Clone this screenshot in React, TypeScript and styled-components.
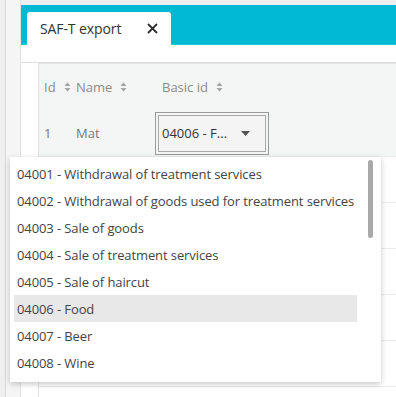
import React from "react";
import styled, { createGlobalStyle } from "styled-components";

const codes = [
  "04001 - Withdrawal of treatment services",
  "04002 - Withdrawal of goods used for treatment services",
  "04003 - Sale of goods",
  "04004 - Sale of treatment services",
  "04005 - Sale of haircut",
  "04006 - Food",
  "04007 - Beer",
  "04008 - Wine",
];

function SortIcon() {
  return (
    <svg width="7" height="10" viewBox="0 0 7 10">
      <path d="M3.5 0.5 L6.5 4 L0.5 4 Z M3.5 9.5 L6.5 6 L0.5 6 Z" fill="#a3a3a3" />
    </svg>
  );
}

export default function App() {
  return (
    <>
      <GlobalStyle />
      <Page>
        <Gutter />
        <Side />
        <Main>
          <TabBar>
            <Tab>
              <span>SAF-T export</span>
              <svg width="11" height="11" viewBox="0 0 11 11">
                <path d="M1 1 L10 10 M10 1 L1 10" stroke="#2e2e2e" strokeWidth="1.8" />
              </svg>
            </Tab>
          </TabBar>
          <SubBar />
          <Content>
            <Card>
              <HeadRow>
                <HeadCell>
                  Id <SortIcon />
                </HeadCell>
                <HeadCell>
                  Name <SortIcon />
                </HeadCell>
                <HeadCell $pad={8}>
                  Basic id <SortIcon />
                </HeadCell>
              </HeadRow>
              <Row>
                <Cell>1</Cell>
                <Cell>Mat</Cell>
                <Cell $pad={4}>
                  <Select>
                    <span>04006 - F...</span>
                    <svg width="9" height="5" viewBox="0 0 9 5">
                      <path d="M0 0 L9 0 L4.5 5 Z" fill="#555" />
                    </svg>
                  </Select>
                </Cell>
              </Row>
              {[0, 1, 2, 3, 4].map((i) => (
                <EmptyRow key={i} />
              ))}
            </Card>
          </Content>
        </Main>
        <Dropdown>
          <List>
            {codes.map((c) => (
              <Item key={c} $active={c === "04006 - Food"}>
                {c}
              </Item>
            ))}
          </List>
          <Thumb />
        </Dropdown>
      </Page>
    </>
  );
}

const GlobalStyle = createGlobalStyle`
  body {
    margin: 0;
    font-family: "Open Sans", "Noto Sans", sans-serif;
    overflow: hidden;
  }
`;

const Page = styled.div`
  position: relative;
  display: flex;
  height: 397px;
  background: #eeeeee;
`;

const Gutter = styled.div`
  width: 5px;
  background: #efefef;
`;

const Side = styled.div`
  width: 14px;
  border-left: 1px solid #d9d9d9;
  background: #f5f5f5;
`;

const Main = styled.div`
  flex: 1;
  display: flex;
  flex-direction: column;
  padding-top: 5px;
  background: #eeeeee;
  border-left: 1px solid #e3e3e3;
`;

const TabBar = styled.div`
  height: 40px;
  box-sizing: border-box;
  display: flex;
  align-items: flex-end;
  padding-left: 6px;
  background: #02b9d5;
  border-bottom: 1px solid #22c7de;
`;

const Tab = styled.div`
  width: 144px;
  height: 33px;
  box-sizing: border-box;
  margin-bottom: -1px;
  display: flex;
  align-items: center;
  justify-content: space-between;
  padding: 0 13px 0 13px;
  background: #ffffff;
  border-radius: 3px 3px 0 0;
  font-size: 14px;
  color: #333333;
  letter-spacing: -0.1px;
`;

const SubBar = styled.div`
  height: 17px;
  background: #ffffff;
  border-bottom: 1px solid #dedede;
`;

const Content = styled.div`
  flex: 1;
  padding-left: 17px;
  background: #ffffff;
`;

const Card = styled.div`
  height: 100%;
  border: 1px solid #e2e2e2;
  border-right: none;
  border-bottom: none;
  background: #ffffff;
`;

const HeadRow = styled.div`
  display: grid;
  grid-template-columns: 32px 83px 1fr;
  height: 46px;
  align-items: center;
  background: #f4f5f5;
`;

const HeadCell = styled.div<{ $pad?: number }>`
  display: flex;
  align-items: center;
  gap: 8px;
  padding-left: ${(p) => p.$pad ?? 5}px;
  font-size: 13px;
  color: #8c8c8c;
  white-space: nowrap;
`;

const Row = styled.div`
  display: grid;
  grid-template-columns: 32px 83px 1fr;
  height: 46px;
  align-items: center;
  background: #f4f5f5;
  border-bottom: 1px solid #ececec;
`;

const Cell = styled.div<{ $pad?: number }>`
  padding-left: ${(p) => p.$pad ?? 5}px;
  font-size: 13px;
  color: #7a7a7a;
`;

const Select = styled.div`
  width: 108px;
  height: 37px;
  box-sizing: border-box;
  display: flex;
  align-items: center;
  justify-content: space-between;
  padding: 0 15px 0 3px;
  border: 1px solid #a9a9a9;
  outline: 1px solid #9a9a9a;
  outline-offset: 2px;
  background: #f4f4f4;
  font-size: 13px;
  color: #333333;
`;

const EmptyRow = styled.div`
  height: 45px;
  border-bottom: 1px solid #ececec;
`;

const Dropdown = styled.div`
  position: absolute;
  left: 10px;
  top: 157px;
  width: 371px;
  height: 225px;
  box-sizing: border-box;
  padding: 3px 0 5px 4px;
  background: #ffffff;
  box-shadow: 0 2px 6px rgba(0, 0, 0, 0.22);
`;

const List = styled.div`
  width: 343px;
`;

const Item = styled.div<{ $active?: boolean }>`
  height: 27px;
  display: flex;
  align-items: center;
  padding-left: 3px;
  font-size: 13px;
  letter-spacing: -0.1px;
  color: #444444;
  white-space: nowrap;
  background: ${(p) => (p.$active ? "#e8e8e8" : "transparent")};
`;

const Thumb = styled.div`
  position: absolute;
  left: 358px;
  top: 3px;
  width: 5px;
  height: 78px;
  border-radius: 3px;
  background: #a9a9a9;
`;
